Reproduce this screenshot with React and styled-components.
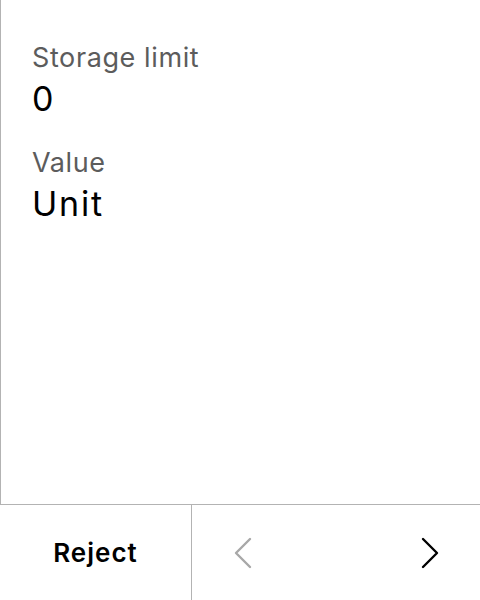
import React from 'react';
import styled, { createGlobalStyle } from 'styled-components';

const GlobalStyle = createGlobalStyle`
    html, body {
        margin: 0;
        padding: 0;
        background: #fff;
    }
    body {
        font-family: Inter, "Noto Sans", sans-serif;
        font-optical-sizing: none;
        font-variation-settings: "opsz" 14;
    }
`;

const Screen = styled.section`
    width: 480px;
    height: 600px;
    display: flex;
    flex-direction: column;
    background: #fff;
`;

const Details = styled.div`
    flex: 1;
    border-left: 1px solid #b3b3b3;
    padding: 42px 0 0 31px;
    display: flex;
    flex-direction: column;
`;

const Field = styled.div`
    display: flex;
    flex-direction: column;
    margin-bottom: 27px;
`;

const Label = styled.span`
    font-size: 27px;
    line-height: 32px;
    letter-spacing: 0.6px;
    color: #5c5c5c;
`;

const Value = styled.span`
    margin-top: 4px;
    font-size: 34px;
    line-height: 42px;
    letter-spacing: 1.8px;
    color: #000;
`;

const Footer = styled.div`
    height: 95px;
    border-top: 1px solid #b3b3b3;
    display: flex;
`;

const RejectButton = styled.button`
    width: 192px;
    border: none;
    border-right: 1px solid #b3b3b3;
    background: none;
    font-family: Inter, sans-serif;
    font-weight: 600;
    font-size: 26px;
    letter-spacing: 1px;
    color: #000;
    padding: 0;
`;

const Pager = styled.div`
    flex: 1;
    display: flex;
    align-items: center;
    justify-content: space-between;
    padding: 0 41px 0 42px;
`;

const Arrow = styled.button`
    border: none;
    background: none;
    padding: 0;
    display: flex;
    color: ${p => (p.disabled ? '#a8a8a8' : '#000')};
`;

const Chevron = ({ left }) => (
    <svg width="18" height="32" viewBox="0 0 18 32" fill="none" stroke="currentColor" strokeWidth="2.4" strokeLinecap="round" strokeLinejoin="round">
        {left ? <path d="M16 2 L2 16 L16 30" /> : <path d="M2 2 L16 16 L2 30" />}
    </svg>
);

export default function App() {
    return (
        <Screen>
            <GlobalStyle />
            <Details>
                <Field>
                    <Label>Storage limit</Label>
                    <Value>0</Value>
                </Field>
                <Field>
                    <Label>Value</Label>
                    <Value>Unit</Value>
                </Field>
            </Details>
            <Footer>
                <RejectButton>Reject</RejectButton>
                <Pager>
                    <Arrow disabled>
                        <Chevron left />
                    </Arrow>
                    <Arrow>
                        <Chevron />
                    </Arrow>
                </Pager>
            </Footer>
        </Screen>
    );
}
